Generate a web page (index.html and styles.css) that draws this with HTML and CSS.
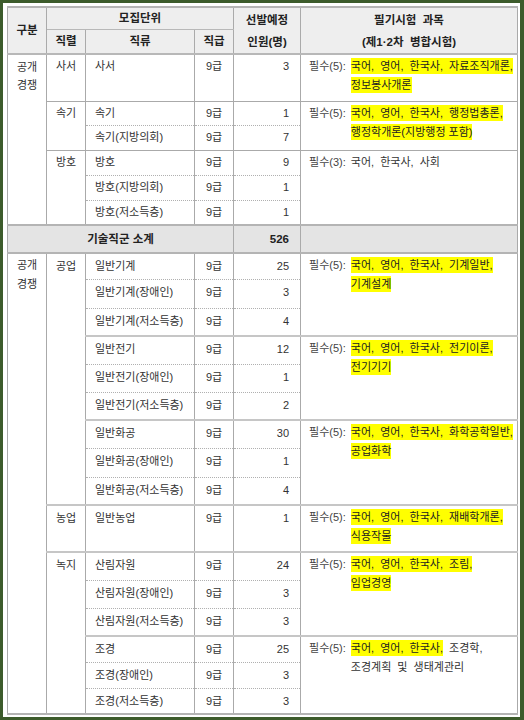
FILE: index.html
```html
<!DOCTYPE html>
<html lang="ko">
<head>
<meta charset="utf-8">
<title>모집단위</title>
<link rel="stylesheet" href="styles.css">
</head>
<body>
<div class="frame">
<table class="tbl">
<colgroup><col class="c1"><col class="c2"><col class="c3"><col class="c4"><col class="c5"><col class="c6"></colgroup>
<thead>
<tr class="hr1"><th rowspan="2">구분</th><th colspan="3" class="mj">모집단위</th><th rowspan="2" class="two">선발예정<br>인원(명)</th><th rowspan="2" class="two">필기시험&nbsp; 과목<br>(제1·2차&nbsp; 병합시험)</th></tr>
<tr class="hr2"><th>직렬</th><th>직류</th><th>직급</th></tr>
</thead>
<tbody class="up">
<tr class="r47"><td class="gb" rowspan="6">공개<br>경쟁</td><td class="sr">사서</td><td class="ry">사서</td><td class="gr">9급</td><td class="nm">3</td><td class="sj"><div class="req"><span class="lab">필수(5):</span><div class="list"><div><span class="hl">국어,&nbsp; 영어,&nbsp; 한국사,&nbsp; 자료조직개론,</span></div><div><span class="hl">정보봉사개론</span></div></div></div></td></tr>
<tr class="r24 g"><td class="sr" rowspan="2">속기</td><td class="ry">속기</td><td class="gr">9급</td><td class="nm">1</td><td class="sj" rowspan="2"><div class="req"><span class="lab">필수(5):</span><div class="list"><div><span class="hl">국어,&nbsp; 영어,&nbsp; 한국사,&nbsp; 행정법총론,</span></div><div><span class="hl">행정학개론(지방행정 포함)</span></div></div></div></td></tr>
<tr class="r25 sub"><td class="ry">속기(지방의회)</td><td class="gr">9급</td><td class="nm">7</td></tr>
<tr class="r25 g"><td class="sr" rowspan="3">방호</td><td class="ry">방호</td><td class="gr">9급</td><td class="nm">9</td><td class="sj" rowspan="3"><div class="req"><span class="lab">필수(3):</span><div class="list"><div>국어,&nbsp; 한국사,&nbsp; 사회</div></div></div></td></tr>
<tr class="r25 sub"><td class="ry">방호(지방의회)</td><td class="gr">9급</td><td class="nm">1</td></tr>
<tr class="r25 sub"><td class="ry">방호(저소득층)</td><td class="gr">9급</td><td class="nm">1</td></tr>
<tr class="r28 tot"><td colspan="4" class="totl">기술직군 소계</td><td class="nm totn">526</td><td></td></tr>
</tbody>
<tbody class="low">
<tr class="r26"><td class="gb" rowspan="16">공개<br>경쟁</td><td class="sr" rowspan="9">공업</td><td class="ry">일반기계</td><td class="gr">9급</td><td class="nm">25</td><td class="sj" rowspan="3"><div class="req"><span class="lab">필수(5):</span><div class="list"><div><span class="hl">국어,&nbsp; 영어,&nbsp; 한국사,&nbsp; 기계일반,</span></div><div><span class="hl">기계설계</span></div></div></div></td></tr>
<tr class="r29 sub"><td class="ry">일반기계(장애인)</td><td class="gr">9급</td><td class="nm">3</td></tr>
<tr class="r28 sub"><td class="ry">일반기계(저소득층)</td><td class="gr">9급</td><td class="nm">4</td></tr>
<tr class="r28 g2"><td class="ry">일반전기</td><td class="gr">9급</td><td class="nm">12</td><td class="sj" rowspan="3"><div class="req"><span class="lab">필수(5):</span><div class="list"><div><span class="hl">국어,&nbsp; 영어,&nbsp; 한국사,&nbsp; 전기이론,</span></div><div><span class="hl">전기기기</span></div></div></div></td></tr>
<tr class="r28 sub"><td class="ry">일반전기(장애인)</td><td class="gr">9급</td><td class="nm">1</td></tr>
<tr class="r28 sub"><td class="ry">일반전기(저소득층)</td><td class="gr">9급</td><td class="nm">2</td></tr>
<tr class="r28 g2"><td class="ry">일반화공</td><td class="gr">9급</td><td class="nm">30</td><td class="sj" rowspan="3"><div class="req"><span class="lab">필수(5):</span><div class="list"><div><span class="hl">국어,&nbsp; 영어,&nbsp; 한국사,&nbsp; 화학공학일반,</span></div><div><span class="hl">공업화학</span></div></div></div></td></tr>
<tr class="r29 sub"><td class="ry">일반화공(장애인)</td><td class="gr">9급</td><td class="nm">1</td></tr>
<tr class="r28 sub"><td class="ry">일반화공(저소득층)</td><td class="gr">9급</td><td class="nm">4</td></tr>
<tr class="r47 g2"><td class="sr">농업</td><td class="ry">일반농업</td><td class="gr">9급</td><td class="nm">1</td><td class="sj"><div class="req"><span class="lab">필수(5):</span><div class="list"><div><span class="hl">국어,&nbsp; 영어,&nbsp; 한국사,&nbsp; 재배학개론,</span></div><div><span class="hl">식용작물</span></div></div></div></td></tr>
<tr class="r28 g2"><td class="sr" rowspan="6">녹지</td><td class="ry">산림자원</td><td class="gr">9급</td><td class="nm">24</td><td class="sj" rowspan="3"><div class="req"><span class="lab">필수(5):</span><div class="list"><div><span class="hl">국어,&nbsp; 영어,&nbsp; 한국사,&nbsp; 조림,</span></div><div><span class="hl">임업경영</span></div></div></div></td></tr>
<tr class="r28 sub"><td class="ry">산림자원(장애인)</td><td class="gr">9급</td><td class="nm">3</td></tr>
<tr class="r28 sub"><td class="ry">산림자원(저소득층)</td><td class="gr">9급</td><td class="nm">3</td></tr>
<tr class="r26 g2"><td class="ry">조경</td><td class="gr">9급</td><td class="nm">25</td><td class="sj" rowspan="3"><div class="req"><span class="lab">필수(5):</span><div class="list"><div><span class="hl">국어,&nbsp; 영어,&nbsp; 한국사,</span>&nbsp; 조경학,</div><div>조경계획&nbsp; 및&nbsp; 생태계관리</div></div></div></td></tr>
<tr class="r26 sub"><td class="ry">조경(장애인)</td><td class="gr">9급</td><td class="nm">3</td></tr>
<tr class="r26 sub"><td class="ry">조경(저소득층)</td><td class="gr">9급</td><td class="nm">3</td></tr>
</tbody>
</table>
</div>
</body>
</html>
```

FILE: styles.css
```css
* { box-sizing: border-box; }
html, body { margin: 0; padding: 0; }
body {
  width: 524px;
  height: 720px;
  background: #ffffff;
  font-family: "Liberation Sans", "Noto Sans CJK KR", sans-serif;
  font-size: 11px;
  color: #333333;
  overflow: hidden;
}
.frame {
  width: 524px;
  height: 720px;
  border-style: solid;
  border-color: #3c5b2b;
  border-width: 3px 4px 3px 3px;
  padding: 3px 3px 0 4px;
  background: #ffffff;
}
.tbl {
  width: 510px;
  border-collapse: collapse;
  table-layout: fixed;
  border-top: 2px solid #b4b4b4;
  border-bottom: 2px solid #b4b4b4;
  border-left: 1px solid #cfcfcf;
  border-right: 1px solid #cfcfcf;
}
.c1 { width: 39px; }
.c2 { width: 39px; }
.c3 { width: 109px; }
.c4 { width: 39px; }
.c5 { width: 67px; }
.c6 { width: 217px; }

th {
  background: #eeeeee;
  color: #222222;
  font-weight: bold;
  font-size: 11.5px;
  text-align: center;
  vertical-align: middle;
  padding: 0;
  border-left: 1px solid #aaaaaa;
  border-right: 1px solid #aaaaaa;
  line-height: 17px;
}
th.two { line-height: 22px; padding-top: 1px; }
.hr1 { height: 22px; }
.hr2 { height: 25px; }
.hr1 .mj { border-bottom: 1px solid #b8b8b8; }
thead { border-bottom: 2px solid #b8b8b8; }

td {
  padding: 0;
  vertical-align: top;
  border-left: 1px solid #aaaaaa;
  border-right: 1px solid #aaaaaa;
  line-height: 17px;
}
.gb { text-align: center; padding-top: 3px; line-height: 18px; }
.sr { text-align: center; padding-top: 3px; }
.ry { text-align: left; padding-left: 9px; padding-top: 3px; white-space: nowrap; }
.gr { text-align: center; padding-top: 3px; }
.nm { text-align: right; padding-right: 11px; padding-top: 3px; }
.sj { padding-left: 8px; padding-top: 2px; }
.low .ry, .low .gr, .low .nm, .low .sr { padding-top: 4px; }
.low .gb { padding-top: 2px; line-height: 19px; }

.req { display: flex; align-items: flex-start; }
.lab { white-space: nowrap; margin-right: 5px; line-height: 19px; color: #444444; }
.list { white-space: nowrap; line-height: 19px; }
.hl { background: #ffff00; padding: 2px 0; color: #222222; }

.r24 { height: 24px; }
.r25 { height: 25px; }
.r26 { height: 26px; }
.r28 { height: 28px; }
.r29 { height: 29px; }
.r47 { height: 47px; }
.r48 { height: 48px; }

.up .g td { border-top: 1px solid #aaaaaa; }
.sub td { border-top: 1px dotted #b0b0b0; }
.low .g2 td { border-top: 2px solid #c6c6c6; }

.tot td {
  background: #e4e4e4;
  border-top: 2px solid #b4b4b4;
  border-bottom: 2px solid #b4b4b4;
  font-weight: bold;
  font-size: 11.5px;
  color: #222222;
  vertical-align: middle;
  padding-top: 0;
}
.tot .totl { text-align: center; }
.tot .totn { text-align: right; padding-right: 11px; }
```
